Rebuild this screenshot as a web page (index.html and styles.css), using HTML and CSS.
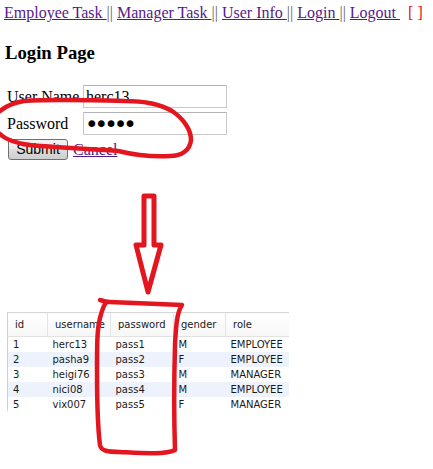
FILE: index.html
```html
<!DOCTYPE html>
<html>
<head>
<meta charset="utf-8">
<title>Login Page</title>
<link rel="stylesheet" href="styles.css">
</head>
<body>
<div class="page">
  <nav class="nav"><a href="#">Employee Task </a><span class="sep">||</span> <a href="#">Manager Task </a><span class="sep">||</span> <a href="#">User Info </a><span class="sep">||</span> <a href="#">Login </a><span class="sep">||</span> <a href="#">Logout </a>&nbsp; <span class="brk">[ ]</span></nav>
  <h3 class="title">Login Page</h3>
  <form class="login">
    <div class="row"><label class="lbl">User Name</label><input class="field" type="text" value="herc13"></div>
    <div class="row"><label class="lbl">Password</label><input class="field pw" type="password" value="pass1"></div>
    <div class="actions"><button class="btn" type="button">Submit</button><a class="cancel" href="#">Cancel</a></div>
  </form>
  <svg class="arrow" width="200" height="110" viewBox="0 190 200 110">
    <path d="M144 197 L154 197 L154 246 L161 246 L148 293 L136 246 L144 246 Z" fill="none" stroke="#e3161f" stroke-width="5" stroke-linejoin="round"/>
  </svg>
  <div class="grid">
    <table class="data">
      <colgroup><col class="c1"><col class="c2"><col class="c3"><col class="c4"><col class="c5"></colgroup>
      <thead><tr><th>id</th><th>username</th><th>password</th><th>gender</th><th>role</th></tr></thead>
      <tbody>
        <tr><td>1</td><td>herc13</td><td>pass1</td><td>M</td><td>EMPLOYEE</td></tr>
        <tr class="alt"><td>2</td><td>pasha9</td><td>pass2</td><td>F</td><td>EMPLOYEE</td></tr>
        <tr><td>3</td><td>heigi76</td><td>pass3</td><td>M</td><td>MANAGER</td></tr>
        <tr class="alt"><td>4</td><td>nici08</td><td>pass4</td><td>M</td><td>EMPLOYEE</td></tr>
        <tr class="last"><td>5</td><td>vix007</td><td>pass5</td><td>F</td><td>MANAGER</td></tr>
      </tbody>
    </table>
  </div>
</div>
<svg class="marks" width="433" height="469" viewBox="0 0 433 469">
  <path d="M0 111 C6 106 12 103 24 101 C50 99 90 100 125 101 C145 101 160 104 172 111 C184 119 191 130 191 140 C190 150 182 156 170 156 C155 157 135 155 118 151 C95 149 60 148 30 145 C15 143 6 140 0 134" fill="none" stroke="#e3161f" stroke-width="4.5" stroke-linecap="round" stroke-linejoin="round"/>
  <path d="M100 300 C103 301 106 302 110 302 C135 303 160 304 182 305 C177 312 176 325 175 345 C174 380 174 420 175 450 C165 455 140 453 120 452 C108 452 101 451 100 445 C98 430 97 400 97 370 C97 345 97 330 100 318 C102 310 104 305 106 303" fill="none" stroke="#e3161f" stroke-width="4.5" stroke-linecap="round" stroke-linejoin="round"/>
</svg>
</body>
</html>
```

FILE: styles.css
```css
html, body {
  margin: 0;
  padding: 0;
  background: #ffffff;
}
body {
  width: 433px;
  height: 469px;
  overflow: hidden;
  position: relative;
  font-family: "Liberation Serif", "Times New Roman", serif;
  font-size: 16px;
  color: #000;
}
.page {
  padding: 4px 0 0 4px;
}
.nav {
  line-height: 18px;
  white-space: nowrap;
}
.nav a {
  color: #551a8b;
  text-decoration: underline;
}
.sep {
  color: #666;
}
.brk {
  color: #e01010;
}
.title {
  margin: 20px 0 0 1px;
  font-size: 18.72px;
  line-height: 22px;
  font-weight: bold;
}
.login {
  margin: 21px 0 0 3px;
}
.row {
  display: flex;
  align-items: center;
  height: 23px;
  margin-bottom: 4px;
}
.lbl {
  width: 76px;
  line-height: 18px;
}
.field {
  box-sizing: border-box;
  width: 144px;
  height: 23px;
  margin: 0;
  padding: 0 2px;
  border: 1px solid #c8c8c8;
  border-top-color: #b4b4b4;
  background: #fff;
  font-family: "Liberation Serif", "Times New Roman", serif;
  font-size: 16px;
  color: #000;
  outline: none;
}
.pw {
  font-family: "DejaVu Sans", sans-serif;
  font-size: 23px;
  letter-spacing: -4px;
  padding-left: 1px;
}
.actions {
  display: flex;
  align-items: center;
  gap: 5px;
  margin-top: 1px;
}
.btn {
  box-sizing: border-box;
  width: 60px;
  height: 21px;
  margin: 0 0 0 1px;
  padding: 0;
  border: 1px solid #707070;
  border-radius: 3px;
  background: linear-gradient(#f2f2f2 0%, #ebebeb 45%, #dddddd 50%, #cfcfcf 100%);
  font-family: "Liberation Sans", Arial, sans-serif;
  font-size: 14px;
  line-height: 19px;
  color: #000;
}
.cancel {
  color: #551a8b;
  line-height: 18px;
}
.arrow {
  display: block;
  margin: 29px 0 0 -4px;
}
.grid {
  margin: 13px 0 0 3px;
  width: 282px;
  height: 99px;
  overflow: hidden;
}
.data {
  border-collapse: collapse;
  table-layout: fixed;
  width: 282px;
  font-family: "DejaVu Sans", Tahoma, sans-serif;
  font-size: 10px;
  color: #1a1a1a;
}
.c1 { width: 40px; }
.c2 { width: 63px; }
.c3 { width: 63px; }
.c4 { width: 52px; }
.c5 { width: 64px; }
.data th {
  height: 23px;
  padding: 0 0 0 7px;
  text-align: left;
  font-weight: normal;
  background: linear-gradient(#ffffff, #f7f7f7);
  border-top: 1px solid #d6d6d6;
  border-bottom: 1px solid #e2e2e2;
  border-left: 1px solid #e4e4e4;
  white-space: nowrap;
  overflow: hidden;
}
.data th:first-child {
  border-left: 1px solid #d0d0d0;
}
.data td {
  height: 15px;
  padding: 0 0 0 5px;
  white-space: nowrap;
  overflow: hidden;
  line-height: 15px;
}
.data td:first-child {
  border-left: 1px solid #d0d0d0;
}
.data tr.alt td {
  background: #edf2fc;
}
.marks {
  position: absolute;
  left: 0;
  top: 0;
  pointer-events: none;
}
```
